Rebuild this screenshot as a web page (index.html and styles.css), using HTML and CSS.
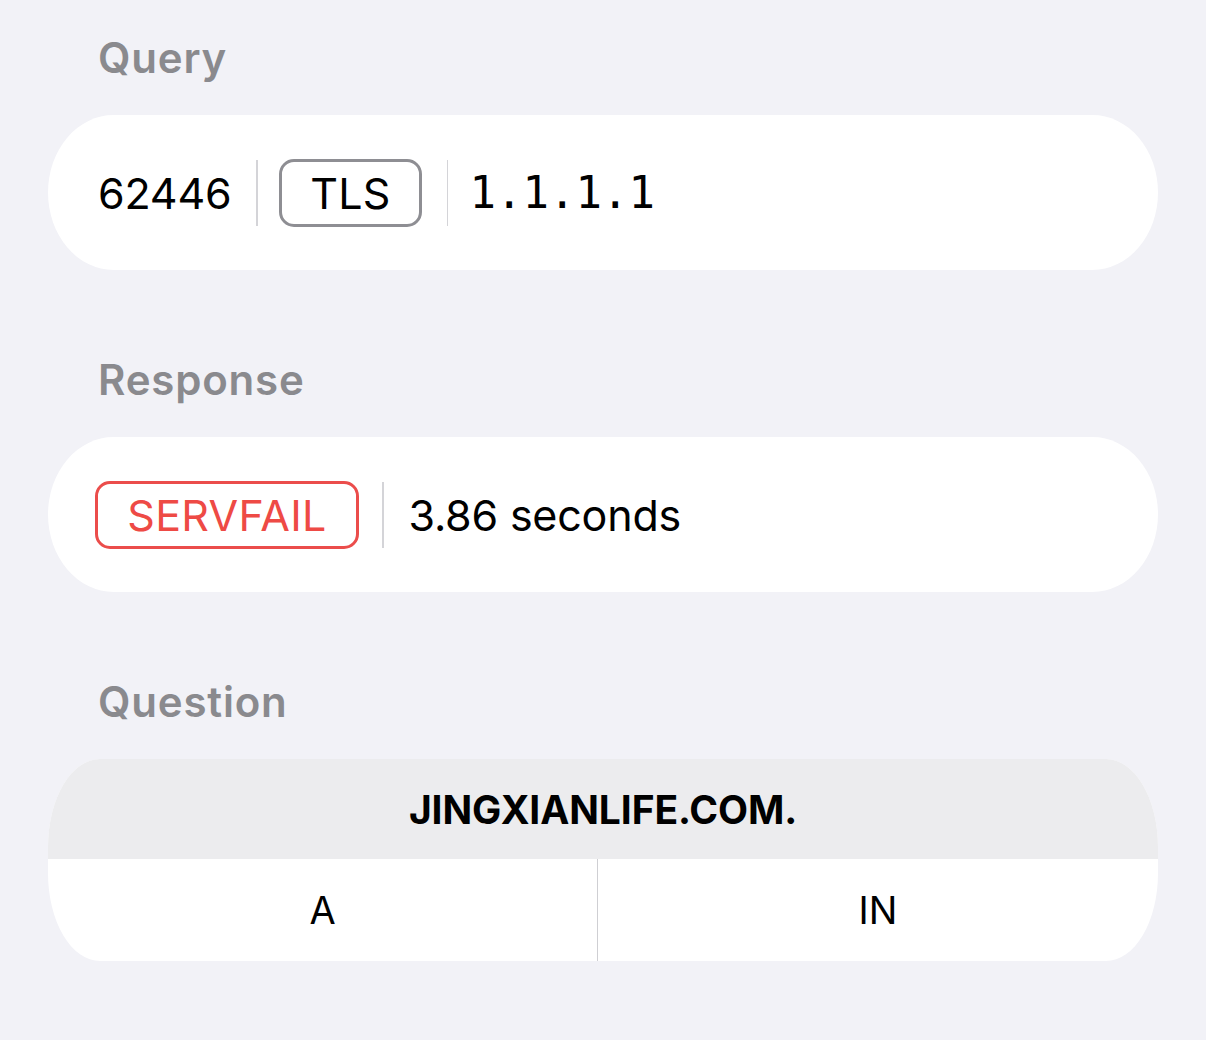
FILE: index.html
```html
<!DOCTYPE html>
<html lang="en">
<head>
<meta charset="utf-8">
<title>DNS Query</title>
<link rel="stylesheet" href="styles.css">
</head>
<body>
  <main class="page">
    <section class="group">
      <h2 class="group-title">Query</h2>
      <div class="card row">
        <span class="value">62446</span>
        <span class="divider"></span>
        <span class="badge badge-gray">TLS</span>
        <span class="divider"></span>
        <span class="value mono">1.1.1.1</span>
      </div>
    </section>

    <section class="group">
      <h2 class="group-title">Response</h2>
      <div class="card row row-tight">
        <span class="badge badge-red">SERVFAIL</span>
        <span class="divider"></span>
        <span class="value">3.86 seconds</span>
      </div>
    </section>

    <section class="group">
      <h2 class="group-title">Question</h2>
      <div class="card table">
        <div class="table-head">JINGXIANLIFE.COM.</div>
        <div class="table-body">
          <div class="cell">A</div>
          <div class="cell">IN</div>
        </div>
      </div>
    </section>
  </main>
</body>
</html>
```

FILE: styles.css
```css
html, body {
  margin: 0;
  padding: 0;
}

body {
  background: #f2f2f7;
  font-family: "Inter", "Noto Sans", "Liberation Sans", sans-serif;
  color: #000;
  width: 1206px;
  height: 1040px;
  overflow: hidden;
}

.page {
  padding: 29px 48px 0 48px;
  display: flex;
  flex-direction: column;
  gap: 81px;
}

.group {
  display: flex;
  flex-direction: column;
}

.group-title {
  margin: 0 0 0 50px;
  font-size: 42px;
  line-height: 58px;
  font-weight: 600;
  color: #8a8a8e;
  letter-spacing: 0.8px;
  padding-bottom: 28px;
}

.card {
  background: #fff;
  border-radius: 66px / 78px;
  overflow: hidden;
}

.row {
  height: 155px;
  display: flex;
  align-items: center;
  padding-left: 50px;
}

.row-tight {
  padding-left: 47px;
}

.value {
  font-size: 43px;
  letter-spacing: -0.2px;
}

.mono {
  font-family: "DejaVu Sans Mono", "Liberation Mono", monospace;
  font-size: 44px;
  letter-spacing: 0;
}

.divider {
  width: 1.5px;
  height: 66px;
  background: #d4d4d8;
  margin: 0 21px 0 25px;
}

.badge {
  box-sizing: border-box;
  height: 68px;
  display: inline-flex;
  align-items: center;
  justify-content: center;
  border-radius: 15px;
  border: 3px solid;
  font-size: 43px;
  letter-spacing: 0.3px;
}

.badge-gray {
  width: 143px;
  border-color: #8e8e93;
  color: #000;
}

.badge-red {
  width: 264px;
  border-color: #eb4d4b;
  color: #ee4a45;
}

.row-tight .divider {
  margin: 0 25px 0 23px;
}

.table {
  border-radius: 52px / 88px;
}

.table-head {
  height: 100px;
  background: #ececee;
  display: flex;
  align-items: center;
  justify-content: center;
  font-size: 39px;
  font-weight: 700;
  letter-spacing: -0.1px;
}

.table-body {
  height: 102px;
  display: grid;
  grid-template-columns: 549px 1fr;
}

.cell {
  display: flex;
  align-items: center;
  justify-content: center;
  font-size: 38px;
}

.cell + .cell {
  border-left: 1px solid #cfcfd3;
}
```
